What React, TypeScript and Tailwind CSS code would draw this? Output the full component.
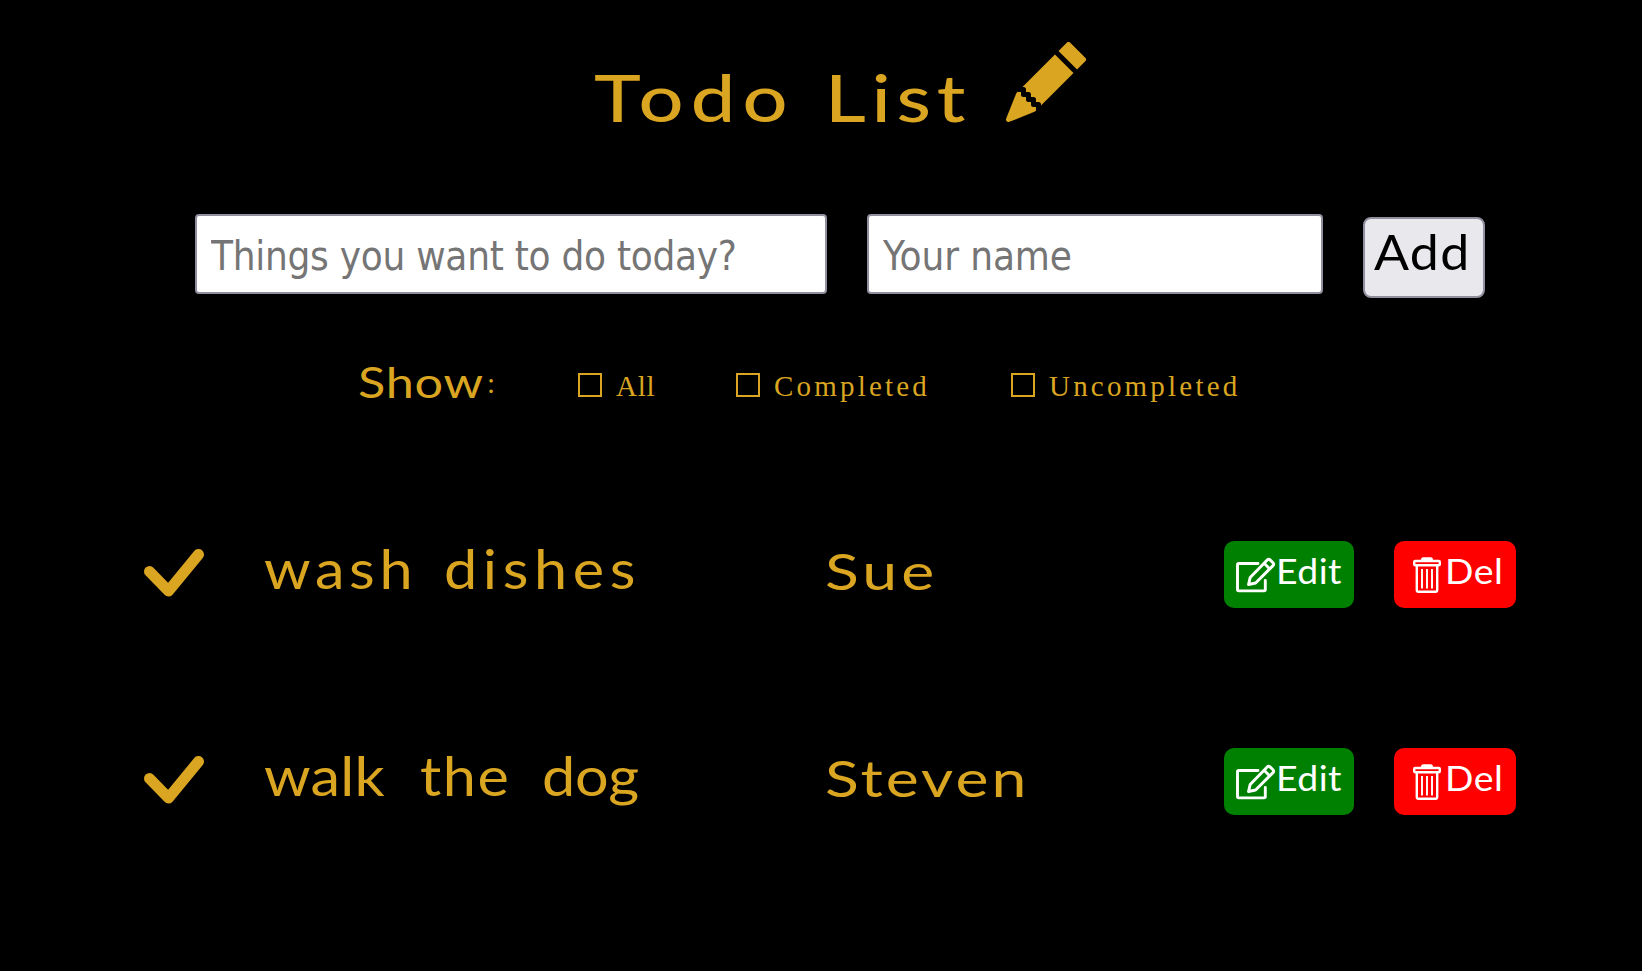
import { BsPencilFill } from "react-icons/bs";

type Word = { text: string; className: string };
type Todo = { words: Word[]; name: string; nameClass: string };

const todos: Todo[] = [
  {
    words: [
      { text: "wash ", className: "mr-[17px] w-[163px] tracking-[4.2px]" },
      { text: "dishes", className: "w-[185px] tracking-[5.1px]" },
    ],
    name: "Sue",
    nameClass: "tracking-[3.2px]",
  },
  {
    words: [
      { text: "walk ", className: "mr-[15px] w-[141px] tracking-[0.2px]" },
      { text: "the ", className: "mr-[12px] w-[110px] tracking-[1.4px]" },
      { text: "dog", className: "w-[100px] tracking-[-0.3px]" },
    ],
    name: "Steven",
    nameClass: "tracking-[2.4px]",
  },
];

const filters = [
  { label: "All", className: "w-[120px] tracking-[0.8px]" },
  { label: "Completed", className: "w-[237px] tracking-[3.2px]" },
  { label: "Uncompleted", className: "w-[200px] tracking-[3.2px]" },
];

function CheckIcon() {
  return (
    <svg className="mt-2 h-12 w-[60px]" viewBox="0 0 60 48" fill="none" stroke="currentColor" strokeWidth="11" strokeLinecap="round" strokeLinejoin="round">
      <path d="M5.5 22.5 24.5 42 54.5 5.5" />
    </svg>
  );
}

function EditIcon() {
  return (
    <svg className="mt-4 h-9 w-10 shrink-0" viewBox="0 0 40 36" fill="none" stroke="currentColor" strokeWidth="2.9" strokeLinejoin="round">
      <path strokeLinecap="round" d="M22 6.5H2.8Q1.5 6.5 1.5 7.8V32.6Q1.5 33.9 2.8 33.9H28Q29.3 33.9 29.3 32.6V23.5" />
      <path d="M12.5 27.5 14.2 20.4 31.2 2.9Q32.6 1.5 34 2.9L37 5.8Q38.4 7.2 37 8.6L19.6 26Z" />
      <path d="M27.9 6 33.8 12" />
    </svg>
  );
}

function TrashIcon() {
  return (
    <svg className="mt-4 h-9 w-7 shrink-0" viewBox="0 0 28 36" fill="none" stroke="currentColor" strokeWidth="2.4" strokeLinejoin="round">
      <rect x="1.2" y="4" width="25.6" height="4.2" rx="1" />
      <path d="M8.8 3.2 10 1.6H18L19.2 3.2" strokeWidth="2.8" />
      <path d="M3.8 8.4V33Q3.8 34.7 5.4 34.7H22.6Q24.2 34.7 24.2 33V8.4" />
      <path strokeWidth="1.9" d="M9 12V31.5M14 12V31.5M19 12V31.5" />
    </svg>
  );
}

export default function App() {
  return (
    <main className="h-[971px] w-[1642px] overflow-hidden bg-black font-['Lato',sans-serif] text-[#daa520]">
      <header className="flex h-[214px] items-start pt-[42px] pl-[594px]">
        <h1 className="mt-[15px] flex text-[66px] leading-[80px] font-medium whitespace-pre">
          <span className="mr-[39px] w-[192px] origin-left scale-x-120 tracking-[6px]">Todo </span>
          <span className="mr-[31px] w-[150px] origin-left scale-x-120 tracking-[4.8px]">List</span>
        </h1>
        <BsPencilFill className="size-20" />
      </header>

      <form className="flex h-[146px] items-start pl-[195px]">
        <input
          className="h-20 w-[632px] rounded-[4px] border-2 border-[#8f8f9d] bg-white pt-1 pl-[14px] font-['DejaVu_Sans_Condensed','DejaVu_Sans',sans-serif] text-[40px] tracking-[-0.27px] [font-stretch:condensed] placeholder:text-[#757575]"
          placeholder="Things you want to do today?"
        />
        <input
          className="ml-10 h-20 w-[456px] rounded-[4px] border-2 border-[#8f8f9d] bg-white pt-1 pl-[14px] font-['DejaVu_Sans_Condensed','DejaVu_Sans',sans-serif] text-[40px] tracking-[-0.1px] [font-stretch:condensed] placeholder:text-[#757575]"
          placeholder="Your name"
        />
        <button type="button" className="mt-[3px] ml-10 flex h-[81px] w-[122px] items-start rounded-lg border-2 border-[#8f8f9d] bg-[#e9e9ed] pt-[8px] pl-[9px] text-[48px] leading-[50px] text-black">
          <span className="origin-left scale-x-108 tracking-[1.2px]">Add</span>
        </button>
      </form>

      <section className="flex h-[181px] items-start pl-[358px]">
        <h2 className="flex w-[220px] text-[42px] leading-10">
          <span className="mt-[2px] mr-[22px] w-[107px] origin-left scale-x-120 tracking-[0.6px]">Show</span>
          <span className="mt-[8px] font-['Liberation_Serif',serif] text-[29px] leading-[30px]">:</span>
        </h2>
        {filters.map((f) => (
          <label key={f.label} className="flex items-start">
            <input type="checkbox" className="mt-[13px] size-6 appearance-none border-2 border-[#daa520]" />
            <span className={`mt-[11px] ml-[14px] font-['Liberation_Serif',serif] text-[29px] leading-[30px] ${f.className}`}>{f.label}</span>
          </label>
        ))}
      </section>

      <ul>
        {todos.map((t) => (
          <li key={t.name} className="flex h-[207px] items-start pl-36">
            <CheckIcon />
            <p className="mt-px ml-[60px] flex w-[561px] text-[54px] leading-[54px] whitespace-pre">
              {t.words.map((w) => (
                <span key={w.text} className={`origin-left scale-x-110 ${w.className}`}>{w.text}</span>
              ))}
            </p>
            <p className={`mt-[3px] mr-[80px] w-[319px] origin-left scale-x-125 text-[50px] leading-[54px] ${t.nameClass}`}>{t.name}</p>
            <button className="flex h-[67px] w-[130px] items-start rounded-[10px] bg-[#008000] pl-3 text-white">
              <EditIcon />
              <span className="mt-[10px] origin-left scale-x-110 text-[34px] leading-10 tracking-[0.4px]">Edit</span>
            </button>
            <button className="ml-10 flex h-[67px] w-[122px] items-start rounded-[10px] bg-[#ff0000] pl-[19px] text-white">
              <TrashIcon />
              <span className="mt-[10px] ml-[4px] origin-left scale-x-110 text-[34px] leading-10 tracking-[0.5px]">Del</span>
            </button>
          </li>
        ))}
      </ul>
    </main>
  );
}
